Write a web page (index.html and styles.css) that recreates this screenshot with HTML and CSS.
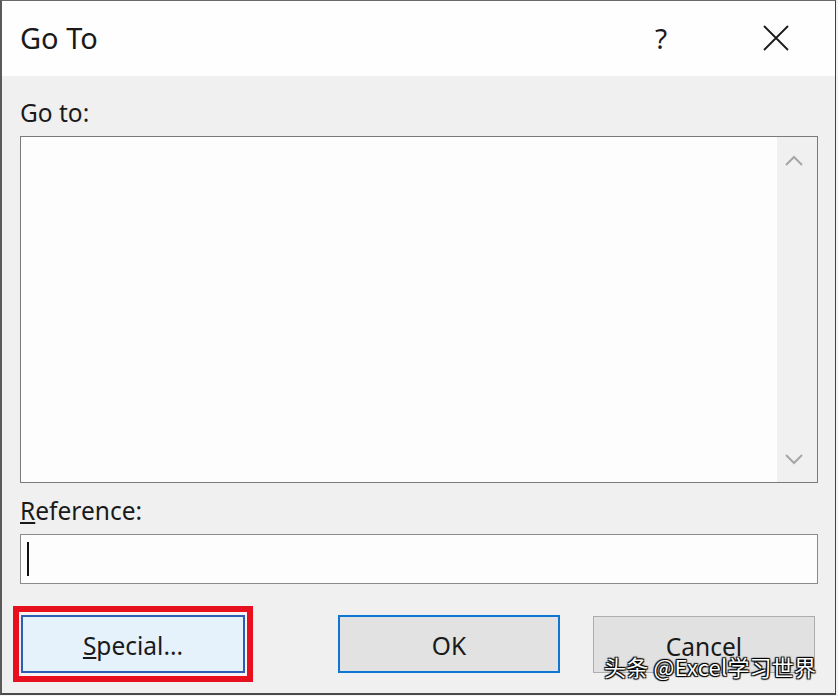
FILE: index.html
```html
<!DOCTYPE html>
<html>
<head>
<meta charset="utf-8">
<link rel="stylesheet" href="styles.css">
</head>
<body>
<div class="dialog">
  <div class="titlebar">
    <span class="title">Go To</span>
    <span class="help">?</span>
    <span class="close">
      <svg width="26" height="26" viewBox="0 0 26 26"><path d="M1 1 L25 25 M25 1 L1 25" stroke="#1a1a1a" stroke-width="1.8" fill="none"/></svg>
    </span>
  </div>
  <div class="body">
    <div class="label lbl-goto">Go to:</div>
    <div class="listbox">
      <div class="list-area"></div>
      <div class="scrollbar">
        <svg width="20" height="12" viewBox="0 0 20 12"><path d="M2 10 L10 2 L18 10" stroke="#a6a6a6" stroke-width="2" fill="none"/></svg>
        <svg width="20" height="12" viewBox="0 0 20 12"><path d="M2 2 L10 10 L18 2" stroke="#a6a6a6" stroke-width="2" fill="none"/></svg>
      </div>
    </div>
    <div class="label lbl-ref"><u>R</u>eference:</div>
    <div class="input"><span class="caret"></span></div>
    <div class="buttons">
      <div class="highlight">
        <div class="btn special"><span><u>S</u>pecial...</span></div>
      </div>
      <div class="btn ok">OK</div>
      <div class="btn cancel">Cancel</div>
      <div class="watermark">头条 @Excel学习世界</div>
    </div>
  </div>
</div>
</body>
</html>
```
FILE: styles.css
```css
html, body {
  margin: 0;
  padding: 0;
  background: #f4f2f4;
  width: 838px;
  height: 696px;
  overflow: hidden;
}
.dialog {
  width: 833px;
  height: 692px;
  border-left: 2px solid #5a5a5a;
  border-top: 1px solid #6a6a6a;
  border-right: 1px solid #4a3d48;
  border-bottom: 2px solid #4a4a4a;
  background: #f0f0f0;
  font-family: "Noto Sans", "Open Sans", sans-serif;
  color: #1a1a1a;
  display: flex;
  flex-direction: column;
}
.titlebar {
  height: 75px;
  background: #fefefe;
  display: flex;
  align-items: center;
  padding-left: 18px;
  box-sizing: border-box;
}
.title {
  font-size: 29px;
  flex: 1;
  margin-top: -2px;
}
.help {
  font-size: 28px;
  width: 30px;
  margin-right: 78px;
  margin-top: -2px;
}
.close {
  width: 26px;
  height: 26px;
  margin-right: 46px;
  margin-top: -2px;
}
.body {
  flex: 1;
  padding: 0 17px 0 18px;
  position: relative;
}
.label {
  font-size: 24.5px;
  line-height: 30px;
}
.lbl-goto {
  margin-top: 22px;
  height: 38px;
}
.listbox {
  height: 347px;
  border: 1px solid #7a7a7a;
  background: #fdfdfd;
  display: flex;
  box-sizing: border-box;
}
.list-area { flex: 1; }
.scrollbar {
  width: 40px;
  background: #f0f0f0;
  display: flex;
  flex-direction: column;
  justify-content: space-between;
  align-items: center;
  padding: 18px 6px 17px 0;
  box-sizing: border-box;
}
.lbl-ref {
  margin-top: 13px;
  height: 38px;
}
.input {
  height: 50px;
  border: 1px solid #8a8a8a;
  background: #fdfdfd;
  box-sizing: border-box;
  display: flex;
  align-items: center;
  padding-left: 6px;
}
.caret {
  width: 2px;
  height: 34px;
  background: #111;
}
.buttons {
  margin-top: 22px;
  display: flex;
  align-items: flex-start;
  position: relative;
}
.highlight {
  margin-left: -7px;
  border: 6px solid #e8101e;
  padding: 3px 2px;
  background: #fbf3f3;
}
.btn {
  width: 222px;
  height: 58px;
  box-sizing: border-box;
  display: flex;
  align-items: center;
  justify-content: center;
  font-size: 24.5px;
  background: #e1e1e1;
}
.special {
  width: 224px;
  border: 2px solid #2c5fb4;
  background: #e5f1fb;
  padding-top: 2px;
}
.ok {
  margin-left: 85px;
  margin-top: 9px;
  border: 2px solid #0f74d2;
  background: #e2e2e2;
  padding-top: 2px;
}
.cancel {
  margin-left: 33px;
  margin-top: 10px;
  height: 57px;
  border: 1px solid #adadad;
  padding-top: 4px;
}
.watermark {
  position: absolute;
  left: 584px;
  top: 44px;
  font-family: "Noto Sans CJK SC", "Liberation Sans", sans-serif;
  font-size: 22px;
  color: #ffffff;
  letter-spacing: 0.2px;
  text-shadow: 0 0 1px #000, 1px 1px 1px #000, -1px -1px 1px #000, 1px -1px 1px #000, -1px 1px 1px #000;
}
```
